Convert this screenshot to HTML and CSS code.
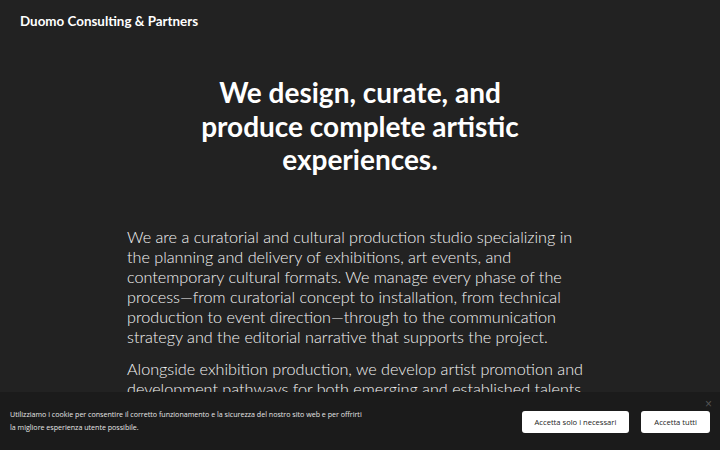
FILE: index.html
```html
<!DOCTYPE html>
<html lang="en">
<head>
<meta charset="utf-8">
<title>Duomo Consulting &amp; Partners</title>
<link rel="stylesheet" href="styles.css">
</head>
<body>
<header class="site-header">
  <a class="brand" href="#">Duomo Consulting &amp; Partners</a>
</header>
<main class="content">
  <h1 class="hero-title">We design, curate, and produce complete artistic experiences.</h1>
  <div class="intro">
    <p>We are a curatorial and cultural production studio specializing in the planning and delivery of exhibitions, art events, and contemporary cultural formats. We manage every phase of the process—from curatorial concept to installation, from technical production to event direction—through to the communication strategy and the editorial narrative that supports the project.</p>
    <p>Alongside exhibition production, we develop artist promotion and development pathways for both emerging and established talents, building strategies that strengthen their visibility.</p>
  </div>
</main>
<div class="cookie-bar">
  <p class="cookie-text">Utilizziamo i cookie per consentire il corretto funzionamento e la sicurezza del nostro sito web e per offrirti la migliore esperienza utente possibile.</p>
  <div class="cookie-actions">
    <button class="cookie-btn">Accetta solo i necessari</button>
    <button class="cookie-btn">Accetta tutti</button>
  </div>
  <button class="cookie-close" aria-label="Chiudi">×</button>
</div>
</body>
</html>
```
FILE: styles.css
```css
html, body {
  margin: 0;
  padding: 0;
  background: #222222;
  color: #ffffff;
  height: 100%;
  overflow: hidden;
}
body {
  font-family: "Lato", "Open Sans", sans-serif;
}
.site-header {
  padding: 10px 20px;
  height: 18px;
}
.brand {
  color: #ffffff;
  text-decoration: none;
  font-weight: 700;
  font-size: 13.4px;
  line-height: 18px;
}
.content {
  display: flex;
  flex-direction: column;
  align-items: center;
}
.hero-title {
  margin: 38px 0 0;
  max-width: 340px;
  text-align: center;
  font-size: 28px;
  line-height: 33.5px;
  font-weight: 700;
}
.intro {
  width: 466px;
  margin-top: 50px;
  font-size: 16.2px;
  line-height: 20px;
  font-weight: 300;
  color: #f4f4f4;
}
.intro p {
  margin: 0 0 12px;
}
.cookie-bar {
  position: fixed;
  left: 0;
  right: 0;
  bottom: 0;
  height: 58px;
  background: #1b1b1b;
  display: flex;
  align-items: center;
  justify-content: space-between;
  padding: 0 10px;
  font-family: "Open Sans", sans-serif;
}
.cookie-text {
  margin: 0;
  flex: 0 0 352px;
  font-size: 7.1px;
  line-height: 13px;
  color: #e6e6e6;
}
.cookie-actions {
  display: flex;
  gap: 12px;
  margin-top: 1px;
}
.cookie-btn {
  background: #ffffff;
  color: #222222;
  border: none;
  border-radius: 3px;
  height: 22px;
  padding: 0 13px;
  white-space: nowrap;
  font-family: "Open Sans", sans-serif;
  font-size: 7.6px;
}
.cookie-close {
  position: absolute;
  top: 6px;
  right: 8px;
  background: none;
  border: none;
  color: #555555;
  font-size: 12px;
  padding: 0;
  line-height: 12px;
}
```
